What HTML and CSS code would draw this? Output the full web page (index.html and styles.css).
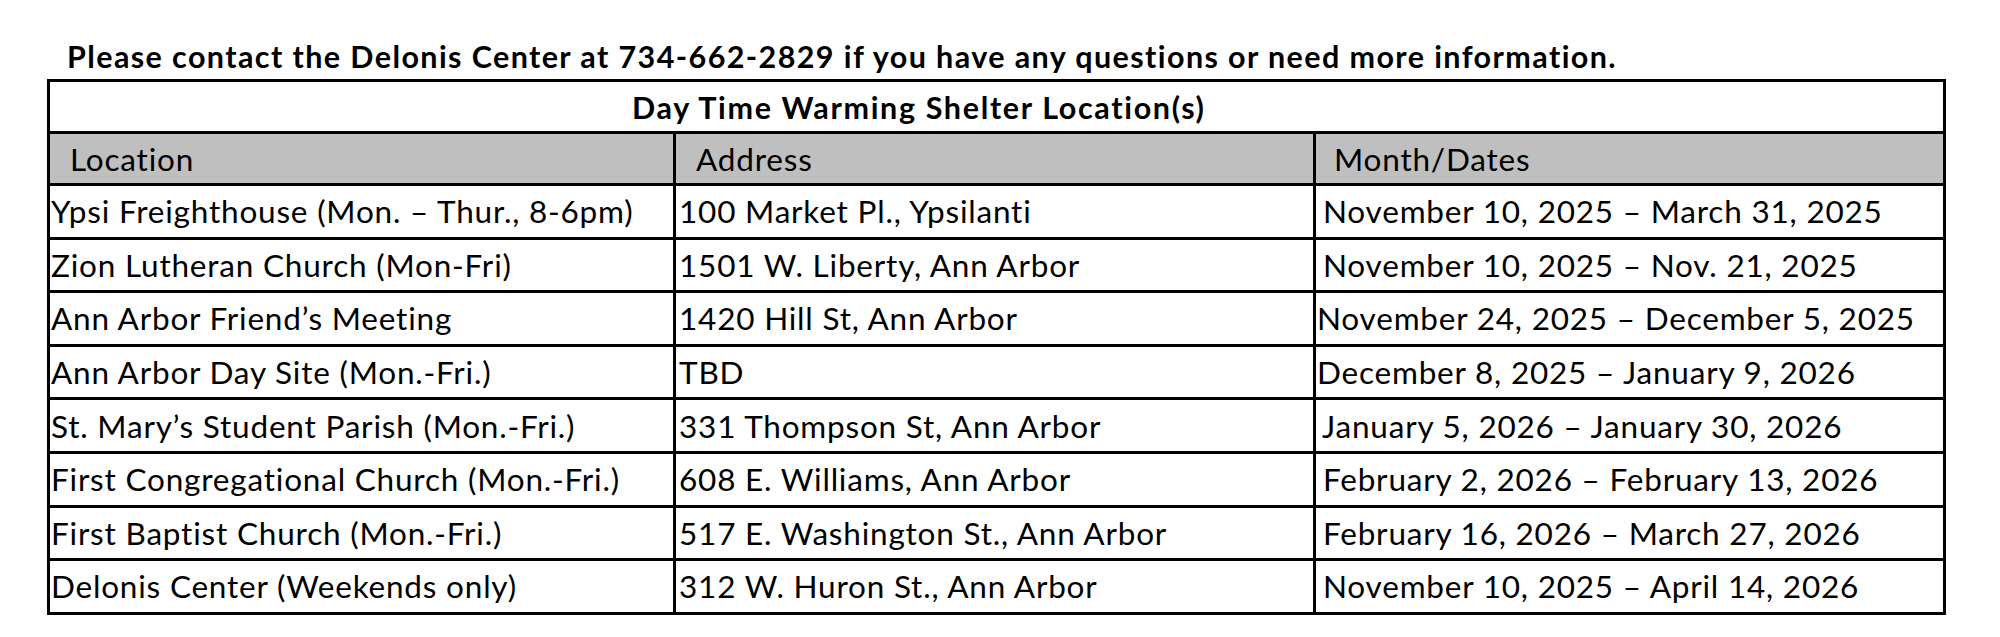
FILE: index.html
```html
<!DOCTYPE html>
<html lang="en">
<head>
<meta charset="utf-8">
<title>Day Time Warming Shelter Locations</title>
<link rel="stylesheet" href="styles.css">
</head>
<body>
<div class="page">
  <p class="notice">Please contact the Delonis Center at 734-662-2829 if you have any questions or need more information.</p>
  <table class="shelters">
    <colgroup>
      <col class="c1">
      <col class="c2">
      <col class="c3">
    </colgroup>
    <tr class="title-row">
      <th colspan="3" class="title">Day Time Warming Shelter Location(s)</th>
    </tr>
    <tr class="head-row">
      <th>Location</th>
      <th>Address</th>
      <th>Month/Dates</th>
    </tr>
    <tr>
      <td>Ypsi Freighthouse (Mon. – Thur., 8-6pm)</td>
      <td>100 Market Pl., Ypsilanti</td>
      <td>November 10, 2025 – March 31, 2025</td>
    </tr>
    <tr>
      <td>Zion Lutheran Church (Mon-Fri)</td>
      <td>1501 W. Liberty, Ann Arbor</td>
      <td>November 10, 2025 – Nov. 21, 2025</td>
    </tr>
    <tr>
      <td>Ann Arbor Friend’s Meeting</td>
      <td>1420 Hill St, Ann Arbor</td>
      <td class="flush">November 24, 2025 – December 5, 2025</td>
    </tr>
    <tr>
      <td>Ann Arbor Day Site (Mon.-Fri.)</td>
      <td>TBD</td>
      <td class="flush">December 8, 2025 – January 9, 2026</td>
    </tr>
    <tr>
      <td>St. Mary’s Student Parish (Mon.-Fri.)</td>
      <td>331 Thompson St, Ann Arbor</td>
      <td class="near">January 5, 2026 – January 30, 2026</td>
    </tr>
    <tr>
      <td>First Congregational Church (Mon.-Fri.)</td>
      <td>608 E. Williams, Ann Arbor</td>
      <td>February 2, 2026 – February 13, 2026</td>
    </tr>
    <tr>
      <td>First Baptist Church (Mon.-Fri.)</td>
      <td>517 E. Washington St., Ann Arbor</td>
      <td>February 16, 2026 – March 27, 2026</td>
    </tr>
    <tr>
      <td>Delonis Center (Weekends only)</td>
      <td>312 W. Huron St., Ann Arbor</td>
      <td>November 10, 2025 – April 14, 2026</td>
    </tr>
  </table>
</div>
</body>
</html>
```
FILE: styles.css
```css
html, body {
  margin: 0;
  padding: 0;
  background: #ffffff;
}

body {
  font-family: Lato, "Open Sans", sans-serif;
  color: #000000;
}

.page {
  padding: 39px 0 0 47px;
}

.notice {
  margin: 0 0 5px 0;
  padding-left: 20px;
  font-weight: 700;
  font-size: 30.5px;
  letter-spacing: 1.4px;
  line-height: 35px;
  white-space: nowrap;
}

.shelters {
  border-collapse: separate;
  border-spacing: 0;
  border: 3px solid #000;
  width: 1899px;
  table-layout: fixed;
}

.c1 { width: 626px; }
.c2 { width: 640px; }
.c3 { width: 627px; }

.shelters th,
.shelters td {
  padding: 0;
  border-top: 3px solid #000;
  border-right: 3px solid #000;
  text-align: left;
  vertical-align: middle;
  font-size: 31.5px;
  letter-spacing: 0.8px;
  line-height: 36px;
  white-space: nowrap;
  font-weight: 400;
  box-sizing: border-box;
}

.shelters th:last-child,
.shelters td:last-child {
  border-right: 0;
}

.shelters td { height: 53.6px; }
.shelters td:first-child { padding-left: 1px; }
.shelters td:nth-child(2) { padding-left: 3px; }
.shelters td:nth-child(3) { padding-left: 7px; }
.shelters td.flush { padding-left: 1px; }
.shelters td.near { padding-left: 6px; }

.shelters .title-row th.title {
  border-top: 0;
  height: 49px;
  font-weight: 700;
  font-size: 30.5px;
  letter-spacing: 1.65px;
  text-align: left;
  padding-left: 582px;
}

.shelters .head-row th {
  background: #bfbfbf;
  height: 52px;
  padding-left: 20px;
}
.shelters .head-row th:last-child { padding-left: 18px; }
```
